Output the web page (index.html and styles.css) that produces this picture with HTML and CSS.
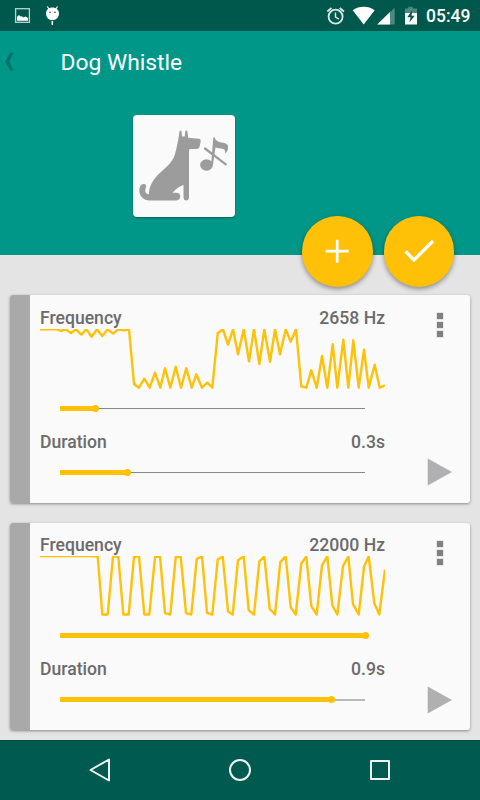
FILE: index.html
```html
<!DOCTYPE html>
<html lang="en">
<head>
  <meta charset="UTF-8" />
  <meta name="viewport" content="width=device-width, initial-scale=1.0"/>
  <title>Dog Whistle</title>
  <link rel="stylesheet" href="styles.css">
</head>
<body>
  <div class="status-bar">
    <svg class="status-left" width="64" height="31" viewBox="0 0 64 31">
      <rect x="15.6" y="8.7" width="13.8" height="13.6" fill="none" stroke="#b9d3cf" stroke-width="1.3"/>
      <path d="M17 20.7v-4l2-1.7 1.5 1.5 1.5-.3 1.5 1.2 2-.8 2.5 1.4v2.7z" fill="#fff"/>
      <path d="M47.3 6.5l2 3M57.5 6.5l-2 3" stroke="#fff" stroke-width="1.2"/>
      <path d="M46 13.5c0-3.5 2.7-6 6.4-6s6.6 2.5 6.6 6c0 3.7-2.8 6.7-6.6 6.7s-6.4-3-6.4-6.7z" fill="#fff"/>
      <path d="M52.3 21v4" stroke="#fff" stroke-width="1.6"/>
      <circle cx="50" cy="12.3" r=".8" fill="#00574b"/>
      <circle cx="55" cy="12.3" r=".8" fill="#00574b"/>
    </svg>
    <svg class="status-right" width="84" height="31" viewBox="0 0 84 31">
      <g fill="none" stroke="#d9e8e5" stroke-width="1.8">
        <circle cx="15.6" cy="16.7" r="7"/>
        <path d="M7.3 11.5l4.2-3.5M24 11.5L19.7 8"/>
        <path d="M15.5 12.5v4.7l3.5 2" stroke-width="1.4"/>
      </g>
      <path d="M32.7 10.3c6.3-4.6 15.7-4.6 22 0l-11 14.2z" fill="#fff"/>
      <path d="M74.7 7.5v17H57.5z" fill="#4d8981"/>
      <path d="M70 12v12.5H57.2z" fill="#fff"/>
    </svg>
    <svg class="battery" width="14" height="31" viewBox="0 0 14 31">
      <path d="M1 8.5h3.3V6.7h4.4v1.8H13V13H1z" fill="#4d8981"/>
      <path d="M1 13h12v11.5H1z" fill="#fff"/>
      <path d="M8.3 10l-5 7.3h3.4l-1.4 5.2 5.4-6.8H7.5z" fill="#00574b"/>
    </svg>
    <span class="clock">05:49</span>
  </div>

  <header class="header">
    <div class="toolbar">
      <svg class="back" width="10" height="19" viewBox="0 0 10 19">
        <path d="M5.3 .5h3.4L4.3 9.5l4.4 9H5.3L.3 9.5z" fill="#00746a"/>
      </svg>
      <h1>Dog Whistle</h1>
    </div>
    <div class="thumb">
      <svg width="102" height="102" viewBox="0 0 102 102">
        <path d="M46.5 16.5c.3-1.5 1.7-1.5 2 0l.6 5h2.6l.6-5c.3-1.5 1.8-1.5 2.1 0l.8 6.3 10.5 1c1.6.2 2.1 1 2 2.5l-.9 4.500c-.5 2.400-1.500 3.200-3.500 3.200h-5.800c-1 0-1.500.5-1.500 1.500v46.800c0 4.400-5.500 4.400-5.500 0V70c-4 1.200-8 4-11 7.800 3 0 6-.3 7 1.200 2 3-.2 6.400-3 6.400H16.500C10.500 85.400 6.300 81 6.300 76c0-4 1.700-6.800 4.200-7 2.500-.1 3.300 2 2.300 4-1.300 2.700-.5 6 3.200 6.300-.2-6.800 3-12.500 7-17.300 7-8 16.500-13 19.200-23.500 1.700-6.500 3.200-14 4.300-22z" fill="#9c9c9c"/>
        <ellipse cx="73.5" cy="50" rx="6.4" ry="5.8" fill="#9c9c9c"/>
        <path d="M78 50.500L80.300 22.500l1.400-.2c.8 3.900 4.300 5 8.300 5.500 4 .6 5.500 2.200 5 5.500-.3 2.500-1 4-3 5 .8-3.500-1-4.500-4-4.800-2.500-.2-4.700-.5-5.500-1L79.900 50z" fill="#9c9c9c"/>
        <path d="M72 33.5L92.8 49.3" stroke="#9c9c9c" stroke-width="2.2" stroke-linecap="round"/>
      </svg>
    </div>
    <div class="actions">
      <button class="fab" aria-label="Add">
        <svg width="71" height="71" viewBox="0 0 71 71">
          <path d="M35.2 23.7v23M23.7 35.2h23" fill="none" stroke="#fff" stroke-width="2.7"/>
        </svg>
      </button>
      <button class="fab" aria-label="Done">
        <svg width="71" height="71" viewBox="0 0 71 71">
          <path d="M21.5 35.5l8.5 8.5 19-19" fill="none" stroke="#fff" stroke-width="3.2"/>
        </svg>
      </button>
    </div>
  </header>

  <main class="list">
    <section class="card">
      <div class="handle"></div>
      <div class="content">
        <div class="row"><span>Frequency</span><span>2658 Hz</span></div>
        <svg class="wave" width="345" height="61" viewBox="0 1 345 61">
          <polyline points="0,1.3 16.7,1.3 21,3 25.7,1.3 31,5 36,1.3 41.3,6.7 46.3,1.3 51.7,8.7 57,1.3 62.3,8 67.7,1.3 73,5.7 78.3,1.3 83.7,2.3 89,1.3 94,56 99,59.7 104.3,50.7 109.7,59.7 115,44.7 120.3,59.7 125,40.3 130.3,59.7 135.7,38.7 141,59.7 146.3,40.3 151.7,59.7 156.3,46.3 162,59.7 167.3,54.7 172.3,59.7 177.7,5.3 183,1.3 188,16.7 193,1.3 198,26.3 203.7,1.3 209,33.3 214,1.3 219.3,36 224.3,1.3 230,33.7 235,1.3 240,26.3 245.7,1.3 250.7,13.7 256,1.3 261.3,58.3 266.3,59.7 271.3,42.3 276.7,59.7 282,28 287.3,59.7 292.7,16.3 297.3,59.7 303.3,11.7 308.3,59.7 313.3,12.3 318.7,59.7 324,21.7 328.7,59.7 334.7,36.7 339.7,59.7 345,57.3"/>
        </svg>
        <div class="slider"><div class="fill" style="width: 35.5px"></div></div>
        <div class="row duration"><span>Duration</span><span>0.3s</span></div>
        <div class="slider"><div class="fill" style="width: 67.5px"></div></div>
      </div>
      <div class="side">
        <svg class="menu" width="10" height="28" viewBox="0 0 10 28">
          <path d="M2 2h6v6H2zM2 11h6v6H2zM2 20h6v6H2z"/>
        </svg>
        <svg class="play" width="26" height="28" viewBox="0 0 26 28">
          <path d="M.7 .5L25 14 .7 27.5z"/>
        </svg>
      </div>
    </section>

    <section class="card">
      <div class="handle"></div>
      <div class="content">
        <div class="row"><span>Frequency</span><span>22000 Hz</span></div>
        <svg class="wave" width="345" height="61" viewBox="0 1 345 61">
          <polyline points="0,1.1 50,1.1 57.7,1.5 62.3,59.5 67.7,59.5 73,1.5 78.3,1.5 83.3,59.5 88.7,59.5 94,1.5 99,1.5 104.3,59.5 109.3,59.5 115,2 120,1.5 125,58.2 130.3,59.5 135.7,2.2 140.7,1.5 146,58.2 151.3,59.5 156.7,3.8 162,1.5 167,57.8 172.3,59.5 177.7,4.5 182.7,1.5 188,56.5 192.7,59.5 198,5.2 203.7,1.5 208.7,55.2 214,59.5 219.3,6.5 224.3,1.5 229.7,53.8 235,59.5 240.3,7.2 245.7,1.5 250.7,52.2 255.7,59.5 261.3,8.5 266.3,1.5 271.3,51.2 276.7,59.5 282,10.2 287.3,1.5 292.3,50.2 297.3,59.5 303,11.2 308.3,1.5 313,49.2 318.7,59.5 324,11.8 328.7,1.5 334.3,48.2 339.3,59.5 345,14.5"/>
        </svg>
        <div class="slider"><div class="fill" style="width: 305px"></div></div>
        <div class="row duration"><span>Duration</span><span>0.9s</span></div>
        <div class="slider light"><div class="fill" style="width: 271px"></div></div>
      </div>
      <div class="side">
        <svg class="menu" width="10" height="28" viewBox="0 0 10 28">
          <path d="M2 2h6v6H2zM2 11h6v6H2zM2 20h6v6H2z"/>
        </svg>
        <svg class="play" width="26" height="28" viewBox="0 0 26 28">
          <path d="M.7 .5L25 14 .7 27.5z"/>
        </svg>
      </div>
    </section>
  </main>

  <nav class="nav-bar">
    <svg width="30" height="30" viewBox="0 0 30 30"><path d="M5.5 15L24 4.5v21z"/></svg>
    <svg width="30" height="30" viewBox="0 0 30 30"><circle cx="15" cy="15" r="10"/></svg>
    <svg width="30" height="30" viewBox="0 0 30 30"><rect x="6" y="6" width="18" height="18"/></svg>
  </nav>
</body>
</html>
```
FILE: styles.css
```css
* {
  box-sizing: border-box;
}
body {
  margin: 0;
  width: 480px;
  height: 800px;
  overflow: hidden;
  background: #e4e4e4;
  font-family: Roboto, sans-serif;
  display: flex;
  flex-direction: column;
}
svg {
  display: block;
  flex-shrink: 0;
}
.status-bar {
  height: 31px;
  flex-shrink: 0;
  background: #00574b;
  color: #fff;
  display: flex;
  align-items: center;
}
.status-right {
  margin-left: auto;
}
.battery {
  margin-right: 8px;
}
.clock {
  width: 54px;
  padding-top: 2px;
  font-size: 17.5px;
  font-weight: 500;
  line-height: 29px;
}
.header {
  height: 224px;
  flex-shrink: 0;
  background: #009788;
  display: flex;
  flex-direction: column;
  position: relative;
  z-index: 1;
}
.toolbar {
  height: 61px;
  padding-left: 5px;
  display: flex;
  align-items: center;
}
.toolbar h1 {
  margin: 2px 0 0 45.5px;
  color: #fff;
  font-size: 22.8px;
  font-weight: 400;
  line-height: 30px;
}
.thumb {
  width: 102px;
  height: 102px;
  margin: 23px 0 0 133px;
  background: #fafafa;
  border-radius: 4px;
  box-shadow: 0 1px 2px rgba(0, 0, 0, 0.35);
}
/* buttons straddle the bottom edge of the header */
.actions {
  position: absolute;
  right: 26px;
  bottom: -31.5px;
  display: flex;
  gap: 10.8px;
}
.fab {
  width: 70.5px;
  height: 70.5px;
  padding: 0;
  border: none;
  border-radius: 50%;
  background: #ffc107;
  box-shadow: 0 2px 5px rgba(0, 0, 0, 0.4);
}
.list {
  padding: 40px 10px 0;
  display: flex;
  flex-direction: column;
  gap: 20px;
  flex: 1;
}
.card {
  height: 207.5px;
  flex-shrink: 0;
  background: #fafafa;
  border-radius: 3px;
  box-shadow: 0 1px 3px rgba(0, 0, 0, 0.4);
  display: flex;
}
.handle {
  width: 20px;
  background: #a9a9a9;
  border-radius: 3px 0 0 3px;
}
.content {
  width: 355px;
  padding: 11.6px 0 0 10px;
}
.row {
  display: flex;
  justify-content: space-between;
  height: 22px;
  line-height: 22px;
  font-size: 17.6px;
  font-weight: 500;
  color: #6b6b6b;
}
.wave {
  fill: none;
  stroke: #ffc107;
  stroke-width: 2.4;
  stroke-linejoin: round;
}
.slider {
  margin: 13.4px 20px 0;
  height: 11px;
  display: flex;
  align-items: center;
  background: linear-gradient(#868686, #868686) center / 100% 1px no-repeat;
}
.slider.light {
  background: linear-gradient(#b9b9b9, #b9b9b9) center / 100% 2px no-repeat;
}
.fill {
  height: 5px;
  background: #ffc107;
  display: flex;
  align-items: center;
  justify-content: flex-end;
}
.fill::after {
  content: "";
  width: 7px;
  height: 7px;
  flex-shrink: 0;
  margin-right: -3.5px;
  border-radius: 50%;
  background: #ffc107;
}
.duration {
  margin-top: 16.6px;
}
.duration + .slider {
  margin-top: 14.4px;
}
.side {
  flex: 1;
  padding: 16px 17px 16.2px 0;
  display: flex;
  flex-direction: column;
  justify-content: space-between;
  align-items: flex-end;
}
.menu {
  margin-right: 8px;
  fill: #808080;
  stroke: #dedede;
  stroke-width: 1.4;
  paint-order: stroke;
}
.play {
  fill: #b0b0b2;
}
.nav-bar {
  height: 60px;
  flex-shrink: 0;
  padding-bottom: 1px;
  background: #005a4f;
  border-top: 1px solid #004d3f;
  display: flex;
  justify-content: center;
  align-items: center;
  gap: 110px;
}
.nav-bar svg {
  fill: none;
  stroke: #eef4f3;
  stroke-width: 2;
  stroke-linejoin: round;
}
```
